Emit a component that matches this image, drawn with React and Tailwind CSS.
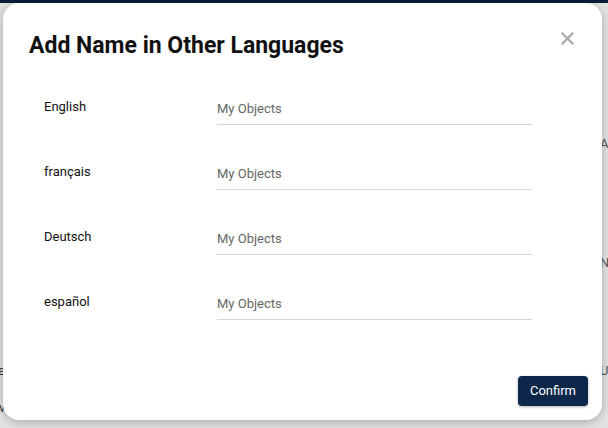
import React from "react";

const rows = ["English", "français", "Deutsch", "español"];

export default function App() {
  return (
    <div className="relative w-[608px] h-[428px] overflow-hidden bg-[#e2e2e2] font-['Roboto',sans-serif]">
      <div className="h-[3px] bg-[#0a1e36]" />
      <span className="absolute left-[-2px] top-[361px] text-[13px] text-[#333]">e</span>
      <span className="absolute left-[-1px] top-[398px] text-[13px] text-[#333]">v</span>
      <span className="absolute left-[600px] top-[134px] text-[13px] text-[#555]">A</span>
      <span className="absolute left-[600px] top-[253px] text-[13px] text-[#555]">N</span>
      <span className="absolute left-[600px] top-[361px] text-[13px] text-[#555]">U</span>
      <div className="absolute left-[3px] top-[3px] w-[599px] h-[417px] bg-white rounded-[16px] shadow-[0_2px_10px_rgba(0,0,0,0.25)] flex flex-col">
        <div className="flex items-start justify-between pl-[26px] pr-[28px] pt-[29px]">
          <h1 className="text-[23px] leading-[27px] font-bold text-[#111]">Add Name in Other Languages</h1>
          <button className="mt-[0px] text-[#a8a8a8]" aria-label="close">
            <svg width="13" height="13" viewBox="0 0 13 13">
              <path d="M1.5 1.5L11.5 11.5M11.5 1.5L1.5 11.5" stroke="currentColor" strokeWidth="2.2" strokeLinecap="square" />
            </svg>
          </button>
        </div>
        <div className="flex flex-col gap-[33px] mt-[34px] pl-[41px]">
          {rows.map((r) => (
            <div key={r} className="flex items-start">
              <div className="w-[173px] pt-[6px] text-[13px] leading-[16px] text-[#111]">{r}</div>
              <div className="w-[315px] h-[32px] border-b border-[#d6d6d6] flex items-center text-[13px] text-[#666]">
                My Objects
              </div>
            </div>
          ))}
        </div>
        <div className="mt-auto flex justify-end pr-[14px] pb-[14px]">
          <button className="w-[70px] h-[30px] rounded-[4px] bg-[#0c2749] text-white text-[13px] shadow-[0_1px_3px_rgba(0,0,0,0.3)]">
            Confirm
          </button>
        </div>
      </div>
    </div>
  );
}
